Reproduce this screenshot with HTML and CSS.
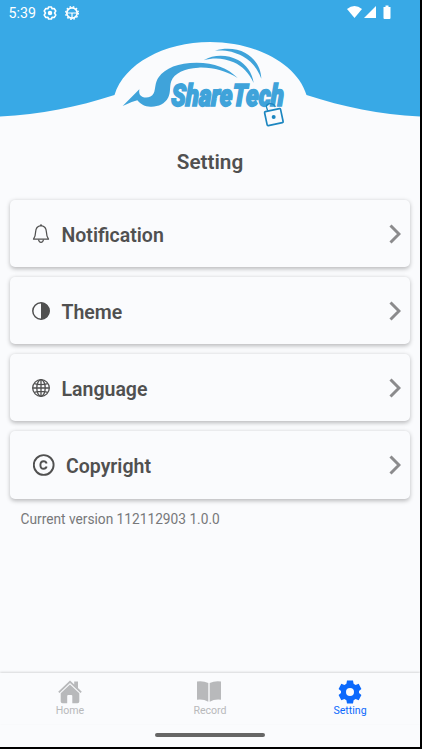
FILE: index.html
```html
<!DOCTYPE html>
<html lang="en">
<head>
<meta charset="utf-8">
<title>Setting</title>
<link rel="stylesheet" href="styles.css">
</head>
<body>
<div class="screen">
  <header class="hero">
    <svg class="hero-art" viewBox="0 0 420 130" width="420" height="130">
      <path fill="#38a9e6" d="M0 0H420V116.500C379 114.500 344 107 306.500 95C297 64 256 42 210 42C164 42 124 64 114.500 95C77 107 41 114.500 0 116.500Z"/>
      <g transform="translate(100 30) scale(.33333)">
        <g fill="#3fa3da">
          <path d="M68 228L118 178C116 190 119 198 128 201C140 205 155 202 161 190C167 178 164 158 176 142C195 114 235 98 290 98C344 99 382 113 413 144C377 123 338 111 295 113C253 115 223 130 214 153C208 170 213 186 205 202C194 224 173 231 151 230C134 230 123 223 112 211Q91 216 68 228Z"/>
          <path d="M311 91C343 72 383 74 414 90C438 103 457 128 461 159C447 128 427 109 401 97C372 84 341 82 311 91Z"/>
          <path d="M345 62C376 53 411 55 436 69C466 86 483 113 484 146C472 115 455 94 428 79C401 64 376 60 345 62Z"/>
        </g>
        <text class="brand" x="0" y="0" textLength="338" lengthAdjust="spacingAndGlyphs" transform="translate(213 227) skewX(-2)">ShareTech</text>
        <g fill="none" stroke="#1c86c0" stroke-width="5">
          <path d="M503 242L499 230Q500 221 511 221Q522 221 526 231" stroke-width="4"/>
          <rect x="497" y="240" width="49" height="43" rx="3" transform="rotate(-12 521 261)"/>
        </g>
        <circle cx="521" cy="261" r="6" fill="#1c86c0"/>
      </g>
    </svg>
    <div class="status">
      <span class="clock">5:39</span>
      <svg class="st-gear" viewBox="0 0 14 14" width="14" height="14" fill="none" stroke="#fff" stroke-width="1.500"><path stroke-linejoin="round" d="M5.500 1H8.500L9 2.800L11.200 2.500L12.800 5L11.500 7L12.800 9L11.200 11.500L9 11.200L8.500 13H5.500L5 11.200L2.800 11.500L1.200 9L2.500 7L1.200 5L2.800 2.500L5 2.800Z"/><circle cx="7" cy="7" r="1.500" fill="#fff"/></svg>
      <svg class="st-cog" viewBox="0 0 14 14" width="14" height="14" fill="none" stroke="#fff"><circle cx="7" cy="7" r="5.200" stroke-width="1.700"/><circle cx="7" cy="7" r="6.300" stroke-width="1.400" stroke-dasharray="1.600 1.700"/><path d="M2 7H12M7 7V12" stroke-width="1.200"/></svg>
      <svg class="st-right" viewBox="0 0 46 15" width="46" height="15" fill="#fff"><path d="M0 4Q7.500-2 15 4L7.500 13Z"/><path d="M29 1V13H17Z"/><path d="M38.500 .5h3v1.500h2v11q0 1-1 1h-5q-1 0-1-1v-11h2Z"/></svg>
    </div>
  </header>

  <h1 class="title">Setting</h1>

  <main class="list">
    <a class="card">
      <svg class="icon" viewBox="0 0 18 20" width="18" height="20" fill="none" stroke="#505050" stroke-width="1.250" stroke-linejoin="round"><path d="M9 1.700C5.300 2.200 3.700 4.700 3.600 8C3.500 12 2.900 13.200 1.500 15.200H16.500C15.100 13.200 14.500 12 14.400 8C14.300 4.700 12.700 2.200 9 1.700Z"/><path d="M6.500 15.500Q7 18.400 9 18.400T11.500 15.500M8 1.200H10"/></svg>
      <span class="label">Notification</span>
      <svg class="chev" viewBox="0 0 12 20" width="12" height="20"><path d="M1.500 1.500L10 10L1.500 18.500"/></svg>
    </a>
    <a class="card">
      <svg class="icon" viewBox="0 0 18 18" width="18" height="18"><circle cx="9" cy="9" r="8.200" fill="none" stroke="#505050" stroke-width="1.500"/><path fill="#505050" d="M9 .5A8.500 8.500 0 0 1 9 17.500Z"/></svg>
      <span class="label">Theme</span>
      <svg class="chev" viewBox="0 0 12 20" width="12" height="20"><path d="M1.500 1.500L10 10L1.500 18.500"/></svg>
    </a>
    <a class="card">
      <svg class="icon" viewBox="0 0 18 18" width="18" height="18" fill="none" stroke="#505050" stroke-width="1.300"><circle cx="9" cy="9" r="8.300"/><ellipse cx="9" cy="9" rx="4.200" ry="8.300"/><path d="M9 .7V17.300M.7 9H17.300M2.200 4.600Q9 6.600 15.800 4.600M2.200 13.400Q9 11.400 15.800 13.400"/></svg>
      <span class="label">Language</span>
      <svg class="chev" viewBox="0 0 12 20" width="12" height="20"><path d="M1.500 1.500L10 10L1.500 18.500"/></svg>
    </a>
    <a class="card card-wide">
      <svg class="icon" viewBox="0 0 22 22" width="22" height="22" fill="none" stroke="#505050" stroke-width="1.900"><circle cx="10.700" cy="11" r="9.900"/><path d="M13.600 9.400C13.200 7.800 12.100 7.200 10.600 7.200C8.600 7.200 7.400 8.600 7.400 11S8.600 14.800 10.600 14.800C12.100 14.800 13.200 14.200 13.600 12.600"/></svg>
      <span class="label">Copyright</span>
      <svg class="chev" viewBox="0 0 12 20" width="12" height="20"><path d="M1.500 1.500L10 10L1.500 18.500"/></svg>
    </a>
  </main>
  <p class="version">Current version 112112903 1.0.0</p>

  <nav class="tabs">
    <a class="tab">
      <svg viewBox="0 0 24 24" width="24" height="24" fill="currentColor"><path d="M12 .5L.2 11.700L1.500 13L12 3L22.500 13L23.800 11.700L20 8V1.500H16.200V4.500Z"/><path d="M12 4.500L2.700 13.300V21.500Q2.700 23.300 4.500 23.300H9.200V16Q9.200 15 10.200 15H13.300Q14.300 15 14.300 16V23.300H19.500Q21.300 23.300 21.300 21.500V13.300Z"/></svg>
      <span>Home</span>
    </a>
    <a class="tab">
      <svg class="book" viewBox="0 0 24 24" width="24" height="24" fill="currentColor"><path d="M0 1.500Q6.500.7 11.300 3V21.700Q6.500 19 0 19.800Z"/><path d="M24 1.500Q17.500.7 12.700 3V21.700Q17.500 19 24 19.800Z"/></svg>
      <span>Record</span>
    </a>
    <a class="tab active">
      <svg viewBox="0 0 24 24" width="24" height="24" fill="currentColor"><path fill-rule="evenodd" d="M9 .5H15L15.600 3.800L17.600 5L20.700 3.800L23.400 8.900L21 11V13L23.400 15.100L20.700 20.200L17.600 19L15.600 20.200L15 23.500H9L8.400 20.200L6.400 19L3.300 20.200L.6 15.100L3 13V11L.6 8.900L3.300 3.800L6.400 5L8.400 3.800ZM12 8A4 4 0 1 0 12 16A4 4 0 1 0 12 8Z"/></svg>
      <span>Setting</span>
    </a>
  </nav>
  <div class="gesture"><div class="pill"></div></div>
</div>
</body>
</html>
```
FILE: styles.css
```css
* { box-sizing: border-box; }
body {
  margin: 0;
  background: #000;
  font-family: Roboto, sans-serif;
  overflow: hidden;
}
.screen {
  width: 420px;
  height: 747px;
  background: #fafbfd;
  display: flex;
  flex-direction: column;
}
.hero { position: relative; height: 130px; flex: none; }
.hero-art { display: block; }
.brand {
  font: italic 900 92px Roboto, sans-serif;
  fill: #3fa3da;
  stroke: #3fa3da;
  stroke-width: 5;
}
.status {
  position: absolute;
  inset: 0 0 auto 0;
  height: 25px;
  padding: 0 27px 0 8.5px;
  display: flex;
  align-items: center;
  color: #fff;
}
.clock { font-size: 14.2px; width: 34px; line-height: 26px; padding-top: 1px; }
.st-cog { margin-left: 8.5px; }
.st-right { margin-left: auto; }
.title {
  margin: 18px 0 0;
  height: 28px;
  line-height: 28px;
  text-align: center;
  font-size: 20.7px;
  font-weight: 600;
  color: #505050;
}
.list {
  margin-top: 24px;
  padding: 0 10px;
  display: flex;
  flex-direction: column;
  gap: 10px;
}
.card {
  height: 67px;
  padding: 1px 9px 0 22px;
  display: flex;
  align-items: center;
  background: #fafbfd;
  border-radius: 5px;
  box-shadow: 0 1.5px 4px rgba(0, 0, 0, .26);
}
.icon { flex: none; }
.label {
  margin-left: 11.5px;
  padding-top: 2px;
  font-size: 19.5px;
  font-weight: 600;
  color: #505050;
}
.card-wide { height: 67.5px; padding-left: 23px; }
.card-wide .label { margin-left: 11px; }
.chev { margin-left: auto; fill: none; stroke: #8b8b8d; stroke-width: 3; }
.version {
  margin: 12.5px 0 0 20.5px;
  font-size: 13.72px;
  line-height: 17px;
  color: #77787a;
}
.tabs {
  margin-top: auto;
  height: 51px;
  flex: none;
  display: grid;
  grid-template-columns: repeat(3, 1fr);
  padding-top: 6.5px;
  box-shadow: 0 -1px 2px rgba(0, 0, 0, .14);
}
.tab {
  display: flex;
  flex-direction: column;
  align-items: center;
  font-size: 10.6px;
  line-height: 13px;
  color: #b8b9bb;
}
.tab span { margin-top: .5px; }
.tab.active { color: #0b69fc; }
.book { margin-left: -2px; }
.gesture { height: 23px; flex: none; display: flex; justify-content: center; padding-top: 9px; }
.pill { width: 110px; height: 4px; border-radius: 2px; background: #666; }
```
